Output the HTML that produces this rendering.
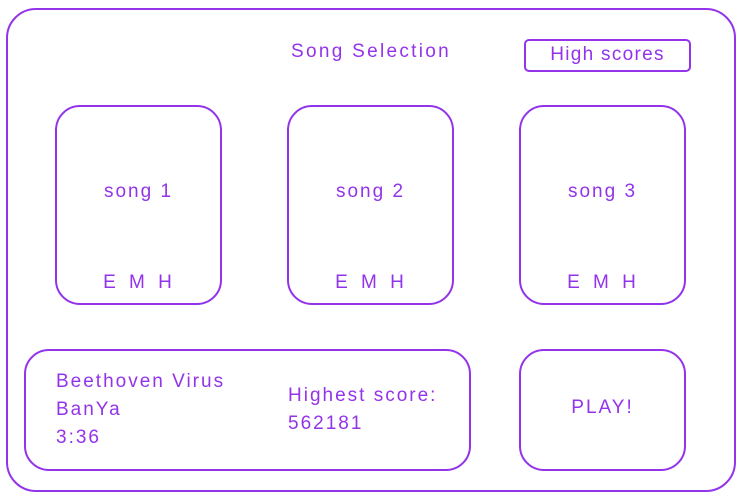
<!DOCTYPE html>
<html><head><style>
body{margin:0;width:744px;height:498px;background:#fff;position:relative;overflow:hidden;font-family:"Liberation Sans",sans-serif;color:#9333ea}
.b{position:absolute;border:2.5px solid #9333ea;box-sizing:border-box}
.t{position:absolute;font-size:19px;white-space:nowrap;letter-spacing:2px}
.c{text-align:center}
</style></head><body>
<div class="b" style="left:6px;top:8px;width:730px;height:484px;border-radius:30px"></div>
<div class="t" style="left:291px;top:41px;letter-spacing:2.3px">Song Selection</div>
<div class="b" style="left:524px;top:39px;width:167px;height:33px;border-radius:5px"></div>
<div class="t c" style="left:524px;top:44px;width:167px;letter-spacing:1.3px">High scores</div>

<div class="b" style="left:55px;top:105px;width:167px;height:200px;border-radius:25px"></div>
<div class="b" style="left:287px;top:105px;width:167px;height:200px;border-radius:25px"></div>
<div class="b" style="left:519px;top:105px;width:167px;height:200px;border-radius:25px"></div>
<div class="t c" style="left:55px;top:181px;width:167px">song 1</div>
<div class="t c" style="left:287px;top:181px;width:167px">song 2</div>
<div class="t c" style="left:519px;top:181px;width:167px">song 3</div>
<div class="t c" style="left:55px;top:272px;width:167px;word-spacing:4px">E M H</div>
<div class="t c" style="left:287px;top:272px;width:167px;word-spacing:4px">E M H</div>
<div class="t c" style="left:519px;top:272px;width:167px;word-spacing:4px">E M H</div>

<div class="b" style="left:24px;top:349px;width:447px;height:122px;border-radius:25px"></div>
<div class="t" style="left:56px;top:368px;line-height:28px">Beethoven Virus<br>BanYa<br>3:36</div>
<div class="t" style="left:288px;top:382px;line-height:28px">Highest score:<br>562181</div>
<div class="b" style="left:519px;top:349px;width:167px;height:122px;border-radius:25px"></div>
<div class="t c" style="left:519px;top:397px;width:167px">PLAY!</div>
</body></html>
